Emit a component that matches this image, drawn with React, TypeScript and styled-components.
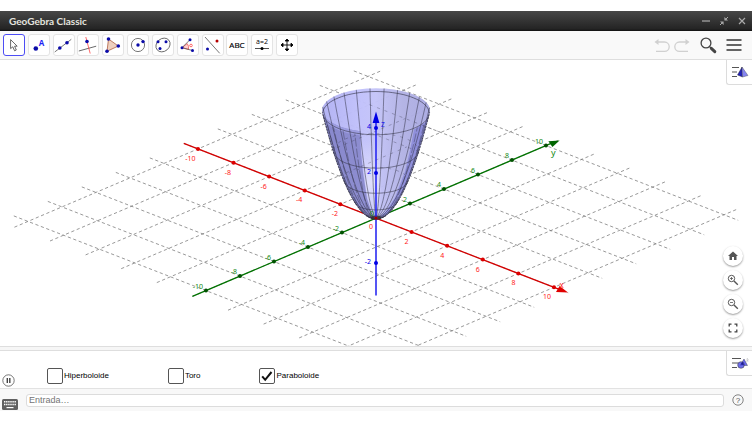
import React, { useState } from "react";
import styled, { createGlobalStyle, css } from "styled-components";

const GlobalStyle = createGlobalStyle`
  * { box-sizing: border-box; }
  body { margin: 0; background: #fff; font-family: "Liberation Sans", Arial, sans-serif; color: #000; }
  button { font: inherit; color: inherit; padding: 0; margin: 0; border: 0; background: none; }
  svg { display: block; }
`;

const Page = styled.div`
  height: 100vh;
  display: flex;
  flex-direction: column;
  padding: 11px 0 12px;
  overflow: hidden;
`;

const TitleBar = styled.header`
  flex: none;
  height: 20px;
  display: flex;
  align-items: center;
  justify-content: space-between;
  padding: 0 4px 0 9px;
  background: linear-gradient(#474747, #242424 90%, #111);
`;

const Title = styled.h1`
  margin: 0;
  font: bold 10px/18px Lato, sans-serif;
  color: #e4e4df;
`;

const WindowControls = styled.div`
  display: flex;
  gap: 6px;
`;

const WindowButton = styled.button`
  width: 12px;
  height: 12px;
`;

const ToolBar = styled.nav`
  flex: none;
  height: 29px;
  display: flex;
  align-items: center;
  justify-content: space-between;
  padding: 0 10px 0 3px;
  background: #f9f9f9;
  border-bottom: 1px solid #dedede;
`;

const Tools = styled.div`
  display: flex;
  justify-content: space-between;
  width: 295px;
`;

const ToolButton = styled.button<{ $active?: boolean }>`
  width: 22px;
  height: 22px;
  display: grid;
  place-items: center;
  background: #fff;
  border: 1px solid ${(p) => (p.$active ? "#4d4df5" : "#e4e4e4")};
  border-radius: 3px;
`;

const Actions = styled.div`
  display: flex;
  align-items: center;
  gap: 4px;
`;

const ActionButton = styled.button<{ $wide?: boolean }>`
  width: ${(p) => (p.$wide ? 28 : 16)}px;
  height: 20px;
  display: flex;
  align-items: center;
  justify-content: center;
  svg { flex: none; }
`;

const View3D = styled.main`
  position: relative;
  flex: 1;
  min-height: 0;
  overflow: hidden;
`;

const Scene = styled.svg`
  width: 100%;
  height: 100%;
  font-family: "Noto Sans", sans-serif;
  font-size: 7px;
`;

const StyleButton = styled.button`
  position: absolute;
  top: 0;
  right: 0;
  width: 26px;
  height: 25px;
  display: grid;
  place-items: center;
  background: #fff;
  border: solid #dcdcdc;
  border-width: 0 0 1px 1px;
  border-bottom-left-radius: 3px;
`;

const ZoomControls = styled.div`
  position: absolute;
  right: 9px;
  bottom: 8px;
  display: flex;
  flex-direction: column;
  gap: 4px;
`;

const RoundButton = styled.button`
  width: 20px;
  height: 20px;
  display: grid;
  place-items: center;
  border-radius: 50%;
  background: #fff;
  box-shadow: 0 1px 2px rgba(0, 0, 0, 0.4);
`;

const Divider = styled.div`
  flex: none;
  height: 5px;
  background: #f6f6f6;
  border: solid #dedede;
  border-width: 1px 0;
`;

const View2D = styled.section`
  position: relative;
  flex: none;
  height: 37px;
  display: flex;
  align-items: flex-end;
  padding: 0 2px;
`;

const PlayButton = styled.button`
  width: 13px;
  height: 15px;
`;

const Checks = styled.div`
  display: flex;
  gap: 59px;
  padding: 0 0 4px 32px;
`;

const CheckLabel = styled.label`
  position: relative;
  display: flex;
  align-items: center;
  gap: 1px;
  font-size: 8px;
  line-height: 16px;
`;

const Box = styled.input`
  appearance: none;
  width: 16px;
  height: 16px;
  margin: 0;
  border: 1px solid #555;
  border-radius: 2px;
  background: #fff;
`;

const Tick = styled.svg`
  position: absolute;
  left: 0;
  top: 0;
  pointer-events: none;
`;

const InputBar = styled.footer`
  flex: none;
  height: 23px;
  display: flex;
  align-items: center;
  gap: 8px;
  padding: 0 8px 0 2px;
  background: #f8f8f8;
  border-top: 1px solid #e2e2e2;
`;

const barButton = css`
  flex: none;
  display: grid;
  place-items: center;
`;

const KeyboardButton = styled.button`
  ${barButton}
  width: 16px;
  height: 12px;
  align-self: flex-end;
`;

const HelpButton = styled.button`
  ${barButton}
  width: 12px;
  height: 12px;
`;

const Entry = styled.input`
  flex: 1;
  min-width: 0;
  height: 13px;
  padding: 0 2px;
  border: 1px solid #dcdcdc;
  border-radius: 3px;
  background: #fff;
  font: 9px/11px "Liberation Sans", Arial, sans-serif;
  color: #333;
  &::placeholder { color: #757575; opacity: 1; }
`;

/* ---------- 3D scene ---------- */

type Pt = [number, number];
const OX = 376;
const OY = 218.6;
const project = (x: number, y: number, z = 0): Pt => [
  OX + 17.8 * x + 17 * y,
  OY + 6.92 * x - 7.25 * y - 22.5 * z,
];
const toPath = (pts: Pt[], close = false) =>
  "M" + pts.map(([x, y]) => `${x.toFixed(1)} ${y.toFixed(1)}`).join("L") + (close ? "Z" : "");
const range = (a: number, b: number, n: number) =>
  Array.from({ length: n + 1 }, (_, i) => a + ((b - a) * i) / n);
const rad = (d: number) => (d * Math.PI) / 180;

// Point of z = r² seen from the camera; angle 90 is the far side.
const bowl = (r: number, deg: number): Pt => [
  OX + 24.6 * r * Math.cos(rad(deg)),
  OY - 22.5 * r * r - 10 * r * Math.sin(rad(deg)),
];
const RIM = 2.19;
const outline = (side: number): Pt[] =>
  range(0.223, RIM, 24).map((r) => [
    OX + side * 24.6 * Math.sqrt(Math.max(0, r * r - 0.0497)),
    OY + 2.2 - 22.5 * r * r,
  ]);
const arc = (r: number, from: number, to: number) => range(from, to, 40).map((a) => bowl(r, a));

const body = toPath([...outline(-1), ...arc(RIM, 186, -6), ...outline(1).reverse()], true);
const leftShade = toPath(
  [...outline(-1), ...arc(RIM, 186, 253), [361, 152], [363, 173], [367, 199], [373, 217]], true);
const leftLip = toPath([...arc(RIM, 186, 253), ...arc(2.14, 253, 186)], true);
const rightShade = toPath(
  [...outline(1), [425, 123], [414, 130], [410, 151], [405, 172], [395, 198], [385, 213]], true);
const rings = [1, 2, 3, 4, 5].map((k) => 0.432 * k);
const evens = [-10, -8, -6, -4, -2, 0, 2, 4, 6, 8, 10];
const meridians = Array.from({ length: 24 }, (_, i) => 6.4 + 15 * i);
const isFar = (m: number) => m < 180;
const isShaded = (m: number) => m < 254 || m > 308;
const END = 10.8;

function Line({ a, b, ...rest }: { a: Pt; b: Pt } & React.SVGProps<SVGPathElement>) {
  return <path d={toPath([a, b])} {...rest} />;
}

function Plot() {
  return (
    <Scene viewBox="0 60 752 287" preserveAspectRatio="xMidYMid slice" role="img" aria-label="Paraboloide">
      <defs>
        <linearGradient id="wall" x1="0" x2="1">
          <stop offset="0" stopColor="#b0b0f2" />
          <stop offset=".35" stopColor="#c0c0fb" />
          <stop offset=".5" stopColor="#c3c3f8" />
          <stop offset=".75" stopColor="#b1b1e4" />
          <stop offset="1" stopColor="#a9a9e2" />
        </linearGradient>
        <linearGradient id="glow" x1="0" x2="0" y1="0" y2="1">
          <stop offset=".3" stopColor="#fff" stopOpacity="0" />
          <stop offset=".7" stopColor="#fff" stopOpacity=".45" />
          <stop offset="1" stopColor="#fff" stopOpacity=".1" />
        </linearGradient>
      </defs>
      <g stroke="#777" strokeWidth=".75" strokeDasharray="3.2 2.6" fill="none">
        {evens.map((v) => (
          <React.Fragment key={v}>
            <Line a={project(-END, v)} b={project(END, v)} />
            <Line a={project(v, -END)} b={project(v, END)} />
          </React.Fragment>
        ))}
      </g>
      <g fill="none" strokeWidth="1.3">
        <Line a={project(-END, 0)} b={project(10.3, 0)} stroke="#d40000" />
        <Line a={project(0, -END)} b={project(0, 10.3)} stroke="#007300" />
      </g>
      <path d="M568 293L556 292.4L559.6 286.6Z" fill="#e00000" />
      <path d="M559.6 141L548.4 141.8L552.4 147.6Z" fill="#006400" />

      <path d={body} fill="url(#wall)" fillOpacity=".96" />
      <path d="M359 110H381L380 214H372L366 190L362 150Z" fill="url(#glow)" />
      <path d={leftShade} fill="#6c6cb4" fillOpacity=".62" />
      <path d={rightShade} fill="#7777d4" fillOpacity=".58" />
      <path d={leftLip} fill="#9d9de0" />
      <g fill="none" stroke="#2e2e40" strokeWidth=".6">
        {rings.map((r) => (
          <path key={r} d={toPath(arc(r, 183, 357))} strokeOpacity=".9" />
        ))}
        <path d={toPath(arc(rings[4], 180, 0))} />
        {meridians.map((m) =>
          isFar(m) || isShaded(m) ? (
            <path
              key={m}
              d={toPath(range(0.1, isFar(m) ? RIM : 2.15, 24).map((r) => bowl(r, m)))}
              strokeOpacity={isFar(m) ? 0.85 : 0.65}
              strokeDasharray={isFar(m) ? undefined : "9 2"}
            />
          ) : null
        )}
        <g strokeDasharray="3 5" strokeOpacity=".5">
          {rings.slice(2, 4).map((r) => (
            <path key={r} d={toPath(arc(r, 175, 5))} />
          ))}
          <Line a={project(-8, 8)} b={project(-4, 8)} />
          <Line a={project(-6, 6)} b={project(-3, 6)} />
          <Line a={project(-6, 4)} b={project(-6, 8)} />
          <Line a={project(-4, 2)} b={project(-4, 6)} />
        </g>
        <path d={toPath(outline(-1))} strokeWidth=".8" strokeDasharray="2 1" />
        <path d={toPath(outline(1))} strokeWidth=".8" strokeDasharray="2 1" />
      </g>
      <ellipse cx="376" cy="218.3" rx="5" ry="2.2" fill="#333" fillOpacity=".8" />

      <path d="M376 296V120" stroke="#1c1cf0" strokeWidth="1.5" />
      <path d="M376 112L379.4 123.4H372.6Z" fill="#0000e6" />
      {evens.map((v) => {
        if (v === 0) return null;
        const [xx, xy] = project(v, 0);
        const [yx, yy] = project(0, v);
        return (
          <React.Fragment key={v}>
            <circle cx={xx} cy={xy} r="2" fill="#dc0000" />
            <circle cx={yx} cy={yy} r="2" fill="#005200" />
            <text x={xx + (v < 0 ? -2.5 : v === 10 ? -7 : -5)} y={xy + 12} textAnchor={v < 0 ? "end" : "middle"} fill="#ff2020">{v}</text>
            <text x={yx - 3} y={yy - 2} textAnchor="end" fill="#138a13">{v}</text>
          </React.Fragment>
        );
      })}
      {[-2, 2, 4].map((v) => (
        <g key={v} fill="#0000e6">
          <circle cx="376" cy={OY - 22.5 * v} r="2" />
          <text x="371" y={OY - 22.5 * v + 1} textAnchor="end">{v}</text>
        </g>
      ))}
      <circle cx="376" cy="218.6" r="1.6" fill="#a00000" />
      <text x="369" y="229.5" fill="#ff2020">0</text>
      <text x="370" y="216" fill="#138a13">0</text>
      <text x="559.5" y="288" fontSize="8" fill="#ff2020">x</text>
      <text x="551" y="156" fontSize="9" fill="#138a13">y</text>
      <text x="381" y="127" fontSize="8" fill="#1c1cf0">z</text>
    </Scene>
  );
}

/* ---------- icons ---------- */

const Dot = ({ x, y, c = "#0b0ba8", r = 1.5 }: { x: number; y: number; c?: string; r?: number }) => (
  <circle cx={x} cy={y} r={r} fill={c} />
);
const Icon = ({ children }: { children: React.ReactNode }) => (
  <svg width="20" height="20" viewBox="0 0 20 20" fill="none" stroke="none">{children}</svg>
);

const tools: { name: string; icon: React.ReactNode }[] = [
  { name: "Elige y mueve", icon: <path d="M6.6 4.6V13.6L8.8 11.8L10.6 15.8L12.3 15L10.6 11.2H13.2Z" fill="#fff" stroke="#444" strokeWidth=".8" /> },
  { name: "Punto", icon: <><Dot x={6.8} y={13.5} r={2.3} /><text x="9.8" y="10.6" fontFamily="Open Sans, sans-serif" fontWeight="bold" fontSize="8" fill="#1f1ff5">A</text></> },
  { name: "Recta", icon: <><path d="M.7 17L17.3 4.3" stroke="#555" strokeWidth=".8" /><Dot x={5.8} y={13} r={1.8} /><Dot x={13} y={7.8} r={1.8} /></> },
  { name: "Perpendicular", icon: <><path d="M.8 16L18.2 11.2" stroke="#444" strokeWidth=".8" /><path d="M7.8 2L12.2 18.5" stroke="#ff4545" strokeWidth=".8" /><Dot x={9} y={6.5} r={1.8} /></> },
  { name: "Polígono", icon: <><path d="M5.5 4L15.3 11L4 16.3Z" fill="#eed0bf" stroke="#ad6040" strokeWidth=".8" /><Dot x={5.5} y={4} r={1.8} /><Dot x={15.3} y={11} r={1.8} /><Dot x={4} y={16.3} r={1.8} /></> },
  { name: "Circunferencia", icon: <><circle cx="10" cy="10" r="6.6" stroke="#555" strokeWidth=".8" /><Dot x={10} y={10} r={1.7} /><Dot x={15} y={6.6} r={1.7} /></> },
  { name: "Elipse", icon: <><ellipse cx="10" cy="10" rx="7.6" ry="6.3" transform="rotate(-40 10 10)" stroke="#555" strokeWidth=".8" /><Dot x={5} y={6.8} /><Dot x={13} y={6.8} /><Dot x={7} y={13.5} /></> },
  { name: "Ángulo", icon: <><path d="M4 12.7L9.2 8.6A6.6 6.6 0 0 1 10.5 14.4Z" fill="#ffd0d0" stroke="#e44" strokeWidth=".7" /><path d="M12 4.7L4 12.7L14.5 15.5" stroke="#555" strokeWidth=".8" /><Dot x={12} y={4.7} /><Dot x={4} y={12.7} /><Dot x={14.5} y={15.5} /><circle cx="13" cy="10.5" r="1.3" stroke="#f33" strokeWidth=".7" /></> },
  { name: "Simetría", icon: <><path d="M2 2L16.7 18.3" stroke="#555" strokeWidth=".8" /><Dot x={4.5} y={14} /><Dot x={14} y={6} c="#b40000" /></> },
  { name: "Texto", icon: <text x="10" y="13" textAnchor="middle" fontFamily="Open Sans, sans-serif" fontSize="8" fill="#000" stroke="#000" strokeWidth=".2">ABC</text> },
  { name: "Deslizador", icon: <><text x="10" y="9" textAnchor="middle" fontFamily="Open Sans, sans-serif" fontSize="7" fill="#000">a=2</text><path d="M3 13.5H17" stroke="#222" strokeWidth=".8" /><Dot x={10} y={13.5} c="#000" /></> },
  { name: "Desplaza vista", icon: <path d="M10 5V15M5 10H15M8.2 6L10 4L11.8 6ZM8.2 14L10 16L11.8 14ZM6 8.2L4 10L6 11.8ZM14 8.2L16 10L14 11.8Z" fill="#000" stroke="#000" strokeWidth=".9" /> },
];

function Magnifier({ plus }: { plus?: boolean }) {
  return (
    <svg width="12" height="12" viewBox="0 0 12 12" fill="none" stroke="#555">
      <circle cx="4.5" cy="4.5" r="3.2" />
      <path d="M7 7L10.8 10.8" strokeWidth="1.4" />
      <path d={plus ? "M3 4.5H6M4.5 3V6" : "M3 4.5H6"} strokeWidth=".8" />
    </svg>
  );
}

function Check({ label, initial = false }: { label: string; initial?: boolean }) {
  const [on, setOn] = useState(initial);
  return (
    <CheckLabel>
      <Box type="checkbox" checked={on} onChange={(e) => setOn(e.target.checked)} />
      {on && (
        <Tick width="16" height="16" viewBox="0 0 16 16" fill="none">
          <path d="M3.2 8.3L6.2 11.8L12.5 4" stroke="#111" strokeWidth="2" />
        </Tick>
      )}
      {label}
    </CheckLabel>
  );
}

export default function App() {
  const [tool, setTool] = useState(0);
  return (
    <>
      <GlobalStyle />
      <Page>
        <TitleBar>
          <Title>GeoGebra Classic</Title>
          <WindowControls>
            <WindowButton aria-label="Minimizar"><svg width="12" height="12" viewBox="0 0 12 12"><path d="M2 6H10" stroke="#aaa" strokeWidth="1.2" /></svg></WindowButton>
            <WindowButton aria-label="Restaurar"><svg width="12" height="12" viewBox="0 0 12 12" fill="#aaa" stroke="#aaa"><path d="M10 2L8 4M2 10L4 8" /><path d="M6.4 2V5.6H10ZM2 6.4H5.6V10Z" stroke="none" /></svg></WindowButton>
            <WindowButton aria-label="Cerrar"><svg width="12" height="12" viewBox="0 0 12 12"><path d="M3 3L9 9M9 3L3 9" stroke="#aaa" strokeWidth="1.2" /></svg></WindowButton>
          </WindowControls>
        </TitleBar>

        <ToolBar>
          <Tools>
            {tools.map((t, i) => (
              <ToolButton key={t.name} aria-label={t.name} $active={i === tool} onClick={() => setTool(i)}>
                <Icon>{t.icon}</Icon>
              </ToolButton>
            ))}
          </Tools>
          <Actions>
            <ActionButton aria-label="Deshacer">
              <svg width="18" height="16" viewBox="0 0 18 16" fill="none" stroke="#d0d0d0" strokeWidth="1.3"><path d="M3 5H11.5A4.7 4.7 0 0 1 11.5 14.4H3" /><path d="M5.5 2V8L1.5 5Z" fill="#d0d0d0" stroke="none" /></svg>
            </ActionButton>
            <ActionButton aria-label="Rehacer">
              <svg width="18" height="16" viewBox="0 0 18 16" fill="none" stroke="#d0d0d0" strokeWidth="1.3"><path d="M15 5H6.5A4.7 4.7 0 0 0 6.5 14.4H15" /><path d="M12.5 2V8L16.5 5Z" fill="#d0d0d0" stroke="none" /></svg>
            </ActionButton>
            <ActionButton $wide aria-label="Buscar">
              <svg width="18" height="18" viewBox="0 0 18 18" fill="none" stroke="#444"><circle cx="7" cy="7" r="4.9" strokeWidth="1.3" /><path d="M10.6 10.6L12.5 12.5" strokeWidth="1.3" /><path d="M12.3 12.3L15.8 15.6" strokeWidth="3" strokeLinecap="round" /></svg>
            </ActionButton>
            <ActionButton aria-label="Menú">
              <svg width="16" height="14" viewBox="0 0 16 14" stroke="#333" strokeWidth="1.6"><path d="M.5 2H15.5M.5 7H15.5M.5 12H15.5" /></svg>
            </ActionButton>
          </Actions>
        </ToolBar>

        <View3D>
          <Plot />
          <StyleButton aria-label="Estilo de la vista 3D">
            <svg width="18" height="14" viewBox="0 0 18 14"><path d="M1 2.5H8M1 7H6M1 11.5H6" stroke="#555" /><path d="M11 2L6.5 10L11.5 12Z" fill="#2222b8" stroke="#222" strokeWidth=".4" /><path d="M11 2L17 10.5L11.5 12Z" fill="#8585f2" stroke="#444" strokeWidth=".4" /></svg>
          </StyleButton>
          <ZoomControls>
            <RoundButton aria-label="Vista estándar"><svg width="12" height="12" viewBox="0 0 24 24" fill="#555"><path d="M10 20v-6h4v6h5v-8h3L12 3 2 12h3v8z" /></svg></RoundButton>
            <RoundButton aria-label="Acercar"><Magnifier plus /></RoundButton>
            <RoundButton aria-label="Alejar"><Magnifier /></RoundButton>
            <RoundButton aria-label="Pantalla completa"><svg width="10" height="10" viewBox="0 0 10 10" fill="none" stroke="#444" strokeWidth="1.3"><path d="M1.2 3.5V1.2H3.5M6.5 1.2H8.8V3.5M8.8 6.5V8.8H6.5M3.5 8.8H1.2V6.5" /></svg></RoundButton>
          </ZoomControls>
        </View3D>

        <Divider />

        <View2D>
          <PlayButton aria-label="Pausa">
            <svg width="13" height="13" viewBox="0 0 13 13"><circle cx="6.5" cy="6.5" r="5.7" fill="#fff" stroke="#555" strokeWidth=".8" /><path d="M5.3 4V9M7.8 4V9" stroke="#444" strokeWidth="1.4" /></svg>
          </PlayButton>
          <Checks>
            <Check label="Hiperboloide" />
            <Check label="Toro" />
            <Check label="Paraboloide" initial />
          </Checks>
          <StyleButton aria-label="Estilo de la vista gráfica">
            <svg width="18" height="14" viewBox="0 0 18 14"><path d="M1 2.5H10M1 7H7M1 11.5H6" stroke="#555" /><path d="M13 3L16.5 9.5H9Z" fill="#6a6af0" stroke="#333" strokeWidth=".4" /><circle cx="10" cy="9" r="3.3" fill="#5656ea" fillOpacity=".85" stroke="#333" strokeWidth=".5" /><path d="M9.5 8.5L11.5 5.7L13 9Z" fill="#1b1b90" /><path d="M15.5 3.2Q16.5 2 17 3T15.6 5H17.5" stroke="#999" strokeWidth=".5" fill="none" /></svg>
          </StyleButton>
        </View2D>

        <InputBar>
          <KeyboardButton aria-label="Teclado">
            <svg width="16" height="12" viewBox="0 0 16 12"><rect y="0" width="16" height="11" rx="1.5" fill="#606060" /><path d="M2 2.8H14M2 5.5H14" stroke="#fff" strokeWidth="1.4" strokeDasharray="1.4 .7" /><path d="M4.5 8.6H11.5" stroke="#fff" strokeWidth="1.2" /></svg>
          </KeyboardButton>
          <Entry aria-label="Entrada" placeholder="Entrada…" />
          <HelpButton aria-label="Ayuda">
            <svg width="12" height="12" viewBox="0 0 12 12"><circle cx="6" cy="6" r="5.2" fill="none" stroke="#666" strokeWidth=".8" /><text x="6" y="8.8" textAnchor="middle" fontFamily="Liberation Sans, sans-serif" fontSize="8" fill="#555">?</text></svg>
          </HelpButton>
        </InputBar>
      </Page>
    </>
  );
}
